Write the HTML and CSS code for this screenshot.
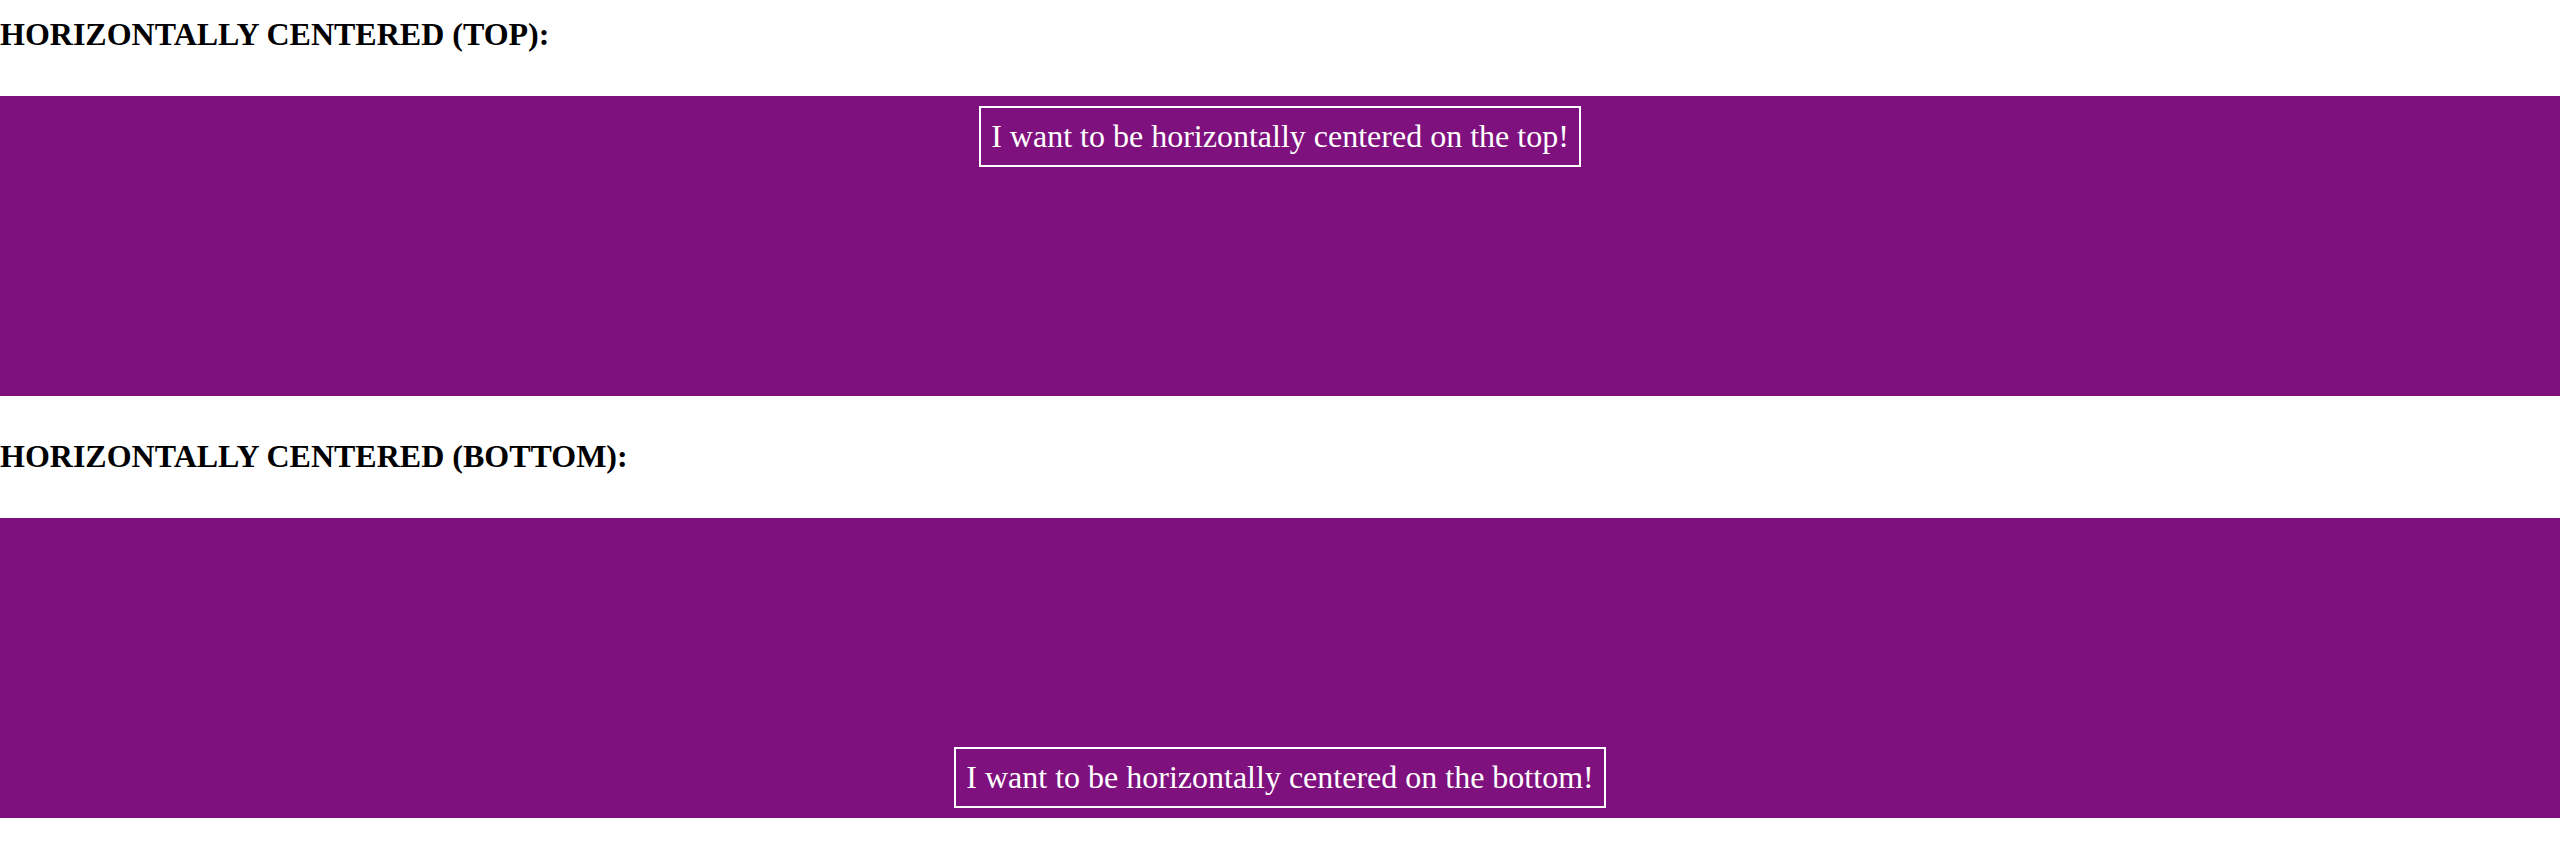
FILE: index.html
```html
<!DOCTYPE html>
<html>
<head>
<meta charset="utf-8">
<title>Horizontally centered</title>
<link rel="stylesheet" href="styles.css">
</head>
<body>
<h4 class="title title-first">HORIZONTALLY CENTERED (TOP):</h4>
<div class="stage stage-top">
  <div class="label">I want to be horizontally centered on the top!</div>
</div>
<h4 class="title">HORIZONTALLY CENTERED (BOTTOM):</h4>
<div class="stage stage-bottom">
  <div class="label">I want to be horizontally centered on the bottom!</div>
</div>
</body>
</html>
```

FILE: styles.css
```css
html, body {
  margin: 0;
  padding: 0;
  background: #ffffff;
}

body {
  font-family: "Liberation Serif", "Times New Roman", serif;
  color: #000000;
}

.title {
  font-size: 32px;
  font-weight: bold;
  line-height: normal;
  margin: 42px 0 43px 0;
}

.title-first {
  margin-top: 16px;
}

.stage {
  height: 300px;
  background: #7f117e;
  display: flex;
  flex-direction: column;
  align-items: center;
}

.stage-top {
  justify-content: flex-start;
}

.stage-bottom {
  justify-content: flex-end;
}

.label {
  margin: 10px;
  padding: 10px;
  border: 2px solid #ffffff;
  color: #ffffff;
  font-size: 32px;
  line-height: normal;
}
```
